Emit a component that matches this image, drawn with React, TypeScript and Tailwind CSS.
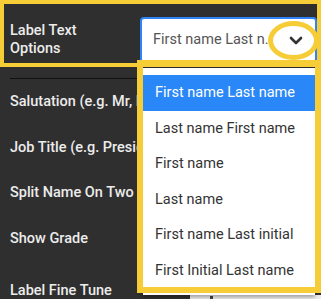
import React from 'react';

const options = [
  'First name Last name',
  'Last name First name',
  'First name',
  'Last name',
  'First name Last initial',
  'First Initial Last name',
];

const rows = [
  { label: 'Salutation (e.g. Mr, Mrs)', h: 'h-[46px]' },
  { label: 'Job Title (e.g. President)', h: 'h-[45px]' },
  { label: 'Split Name On Two Lines', h: 'h-[46px]' },
  { label: 'Show Grade', h: 'h-[46px]' },
];

export default function App() {
  return (
    <div className="relative w-[321px] h-[299px] overflow-hidden bg-[#2f2f2f] font-['Roboto','Liberation_Sans',sans-serif]">
      {/* top row */}
      <div className="flex items-end h-[63px] pl-[10px] pr-[4px]">
        <div className="w-[130px] h-[46px] flex flex-col justify-center text-[14.5px] leading-[18px] font-medium text-[#ececec]">
          <span>Label Text</span>
          <span>Options</span>
        </div>
        <div className="flex-1 h-[46px] flex items-center justify-between rounded-[4px] border-2 border-[#2f83f7] bg-white pl-[11px] pr-[10px]">
          <span className="text-[14.5px] text-[#555] whitespace-nowrap">First name Last n.</span>
          <svg width="14" height="9" viewBox="0 0 14 9" className="mr-[2px]">
            <path d="M2 2l5 5 5-5" fill="none" stroke="#333" strokeWidth="2.6" strokeLinecap="round" strokeLinejoin="round" />
          </svg>
        </div>
      </div>

      {/* settings rows */}
      <div className="ml-[10px] mt-[15px] border-t border-[#111] flex flex-col">
        {rows.map((r) => (
          <div key={r.label} className={`${r.h} flex items-center text-[14.5px] font-medium text-[#ececec] whitespace-nowrap`}>
            {r.label}
          </div>
        ))}
        <div className="flex items-start h-[40px] pt-[20px]">
          <span className="w-[180px] text-[14.5px] leading-[17px] font-medium text-[#ececec] whitespace-nowrap">Label Fine Tune</span>
          <div className="flex-1 mt-[13px] h-[20px] bg-[#ececec] pl-[20px]">
            <span className="block w-[3px] h-[3px] bg-[#444] mt-[1px]" />
          </div>
        </div>
      </div>

      {/* dropdown menu */}
      <div className="absolute left-[143px] top-[68px] w-[172px] h-[227px] bg-white shadow-[0_2px_4px_rgba(0,0,0,0.35)] pt-[7px]">
        {options.map((o, i) => (
          <div
            key={o}
            className={`h-[35.6px] flex items-center pl-[12px] text-[14.5px] whitespace-nowrap ${i === 0 ? 'bg-[#2a87f7] text-white' : 'text-[#333]'}`}
          >
            {o}
          </div>
        ))}
      </div>

      {/* annotation marks */}
      <div className="absolute left-0 top-0 w-[321px] h-[67px] border-[4px] border-[#f6cd36] pointer-events-none" />
      <div className="absolute left-[137px] top-[60px] w-[184px] h-[233px] border-[6px] border-[#f6cd36] pointer-events-none" />
      <div className="absolute left-[268px] top-[21px] w-[51px] h-[39px] rounded-[50%] border-[5px] border-[#f6cd36] pointer-events-none" />
    </div>
  );
}
